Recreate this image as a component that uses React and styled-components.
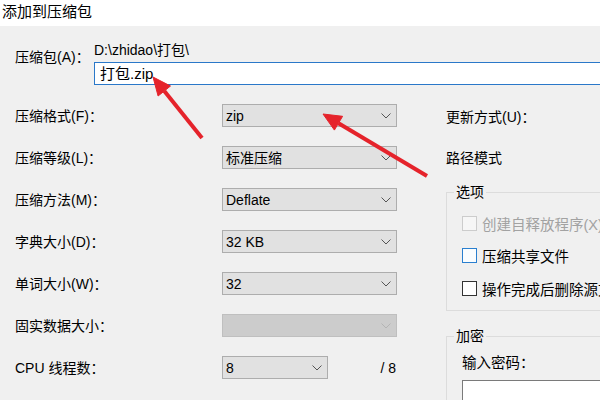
import React from "react";
import styled, { createGlobalStyle } from "styled-components";

const Global = createGlobalStyle`
  html, body { margin: 0; padding: 0; }
  body {
    width: 600px; height: 400px; overflow: hidden;
    font-family: "Liberation Sans", "Noto Sans CJK SC", sans-serif;
    color: #000;
  }
  * { box-sizing: border-box; }
`;

const Window = styled.div`
  position: relative;
  width: 600px;
  height: 400px;
  overflow: hidden;
  background: #f0f0f0;
  display: flex;
  flex-direction: column;
`;

const TitleBar = styled.div`
  height: 26px;
  flex: none;
  background: #fff;
  font-size: 15px;
  line-height: 24px;
  padding-left: 2px;
  color: #000;
`;

const Body = styled.div`
  flex: 1;
  padding: 16px 0 0 15px;
  display: flex;
  flex-direction: column;
  font-size: 14px;
`;

const ArchiveRow = styled.div`
  display: flex;
`;

const ArchiveLabel = styled.div`
  width: 79px;
  flex: none;
  line-height: 16px;
  margin-top: 7px;
  white-space: nowrap;
`;

const ArchiveField = styled.div`
  display: flex;
  flex-direction: column;
  gap: 4px;
`;

const PathText = styled.div`
  line-height: 16px;
  white-space: nowrap;
`;

const NameInput = styled.div`
  width: 520px;
  height: 23px;
  border: 1px solid #2a78c9;
  background: #fff;
  padding-left: 5px;
  font-size: 15px;
  line-height: 21px;
  white-space: nowrap;
`;

const Columns = styled.div`
  display: flex;
  margin-top: 19px;
`;

const FormGrid = styled.div`
  display: grid;
  grid-template-columns: 207px 175px;
  grid-auto-rows: 23px;
  row-gap: 19px;
  align-items: center;
`;

const Label = styled.div`
  white-space: nowrap;
  line-height: 16px;
`;

const SelectBox = styled.div`
  height: 23px;
  width: ${(p) => (p.$w ? `${p.$w}px` : "100%")};
  border: 1px solid ${(p) => (p.$disabled ? "#bfbfbf" : "#adadad")};
  background: ${(p) => (p.$disabled ? "#cccccc" : "#e1e1e1")};
  display: flex;
  align-items: center;
  justify-content: space-between;
  padding: 0 5px 0 3px;
  line-height: 16px;
  white-space: nowrap;
`;

const CpuCell = styled.div`
  display: flex;
  align-items: center;
  justify-content: space-between;
`;

const Count = styled.div`
  line-height: 16px;
  padding-right: 1px;
`;

const RightCol = styled.div`
  margin-left: 49px;
  display: flex;
  flex-direction: column;
  width: 220px;
  flex: none;
`;

const RightRow = styled.div`
  height: 23px;
  display: flex;
  align-items: center;
  white-space: nowrap;
  margin-bottom: ${(p) => p.$mb || 0}px;
`;

const Group = styled.fieldset`
  margin: ${(p) => p.$mt || 0}px 0 0 0;
  border: 1px solid #dcdcdc;
  padding: ${(p) => p.$pt}px 0 ${(p) => p.$pb}px 15px;
  min-width: 0;
`;

const Legend = styled.legend`
  padding: 0 2px;
  margin-left: -8px;
  line-height: 16px;
  font-size: 14px;
`;

const CheckList = styled.div`
  display: flex;
  flex-direction: column;
  gap: 12.5px;
`;

const CheckRow = styled.div`
  display: flex;
  align-items: center;
  height: 20px;
  gap: 5px;
  white-space: nowrap;
  font-size: 14.5px;
  color: ${(p) => (p.$disabled ? "#a2a2a2" : "#000")};
`;

const Box = styled.span`
  width: 15px;
  height: 15px;
  flex: none;
  border: 1px solid ${(p) => p.$border};
  background: ${(p) => p.$bg};
`;

const PwLabel = styled.div`
  line-height: 20px;
  font-size: 14.5px;
  white-space: nowrap;
`;

const PwInput = styled.div`
  margin-top: 7px;
  width: 200px;
  height: 30px;
  border: 1px solid #7a7a7a;
  background: #fff;
`;

const Overlay = styled.svg`
  position: absolute;
  left: 0;
  top: 0;
  pointer-events: none;
`;

const Chevron = ({ light }) => (
  <svg width="10" height="6" viewBox="0 0 10 6">
    <polyline
      points="0.5,0.5 5,5 9.5,0.5"
      fill="none"
      stroke={light ? "#b4b4b4" : "#555"}
      strokeWidth="1"
    />
  </svg>
);

const Select = ({ value, disabled, w }) => (
  <SelectBox $disabled={disabled} $w={w}>
    <span>{value}</span>
    <Chevron light={disabled} />
  </SelectBox>
);

const rows = [
  ["压缩格式(F)：", "zip"],
  ["压缩等级(L)：", "标准压缩"],
  ["压缩方法(M)：", "Deflate"],
  ["字典大小(D)：", "32 KB"],
  ["单词大小(W)：", "32"],
  ["固实数据大小：", "", true],
];

export default function App() {
  return (
    <>
      <Global />
      <Window>
        <TitleBar>添加到压缩包</TitleBar>
        <Body>
          <ArchiveRow>
            <ArchiveLabel>压缩包(A)：</ArchiveLabel>
            <ArchiveField>
              <PathText>D:\zhidao\打包\</PathText>
              <NameInput>打包.zip</NameInput>
            </ArchiveField>
          </ArchiveRow>
          <Columns>
            <FormGrid>
              {rows.map(([l, v, d]) => (
                <React.Fragment key={l}>
                  <Label>{l}</Label>
                  <Select value={v} disabled={d} />
                </React.Fragment>
              ))}
              <Label>CPU 线程数：</Label>
              <CpuCell>
                <Select value="8" w={106} />
                <Count>/ 8</Count>
              </CpuCell>
            </FormGrid>
            <RightCol>
              <RightRow $mb={18}>更新方式(U)：</RightRow>
              <RightRow $mb={16}>路径模式</RightRow>
              <Group $pt={13} $pb={12}>
                <Legend>选项</Legend>
                <CheckList>
                  <CheckRow $disabled>
                    <Box $border="#cccccc" $bg="#f6f6f6" />
                    创建自释放程序(X)
                  </CheckRow>
                  <CheckRow>
                    <Box $border="#2a7fcf" $bg="#fafdff" />
                    压缩共享文件
                  </CheckRow>
                  <CheckRow>
                    <Box $border="#333333" $bg="#ffffff" />
                    操作完成后删除源文件
                  </CheckRow>
                </CheckList>
              </Group>
              <Group $mt={17} $pt={9} $pb={0}>
                <Legend>加密</Legend>
                <PwLabel>输入密码：</PwLabel>
                <PwInput />
              </Group>
            </RightCol>
          </Columns>
        </Body>
        <Overlay width="600" height="400" viewBox="0 0 600 400">
          <g fill="#e5232b" stroke="#e5232b">
            <line x1="202" y1="138" x2="164.3" y2="91" strokeWidth="4" />
            <polygon points="153,77 170.5,86 158.1,96" strokeWidth="1" />
            <line x1="427" y1="176" x2="338.5" y2="123.2" strokeWidth="4" />
            <polygon points="323,114 342.6,116.3 334.4,130.1" strokeWidth="1" />
          </g>
        </Overlay>
      </Window>
    </>
  );
}
